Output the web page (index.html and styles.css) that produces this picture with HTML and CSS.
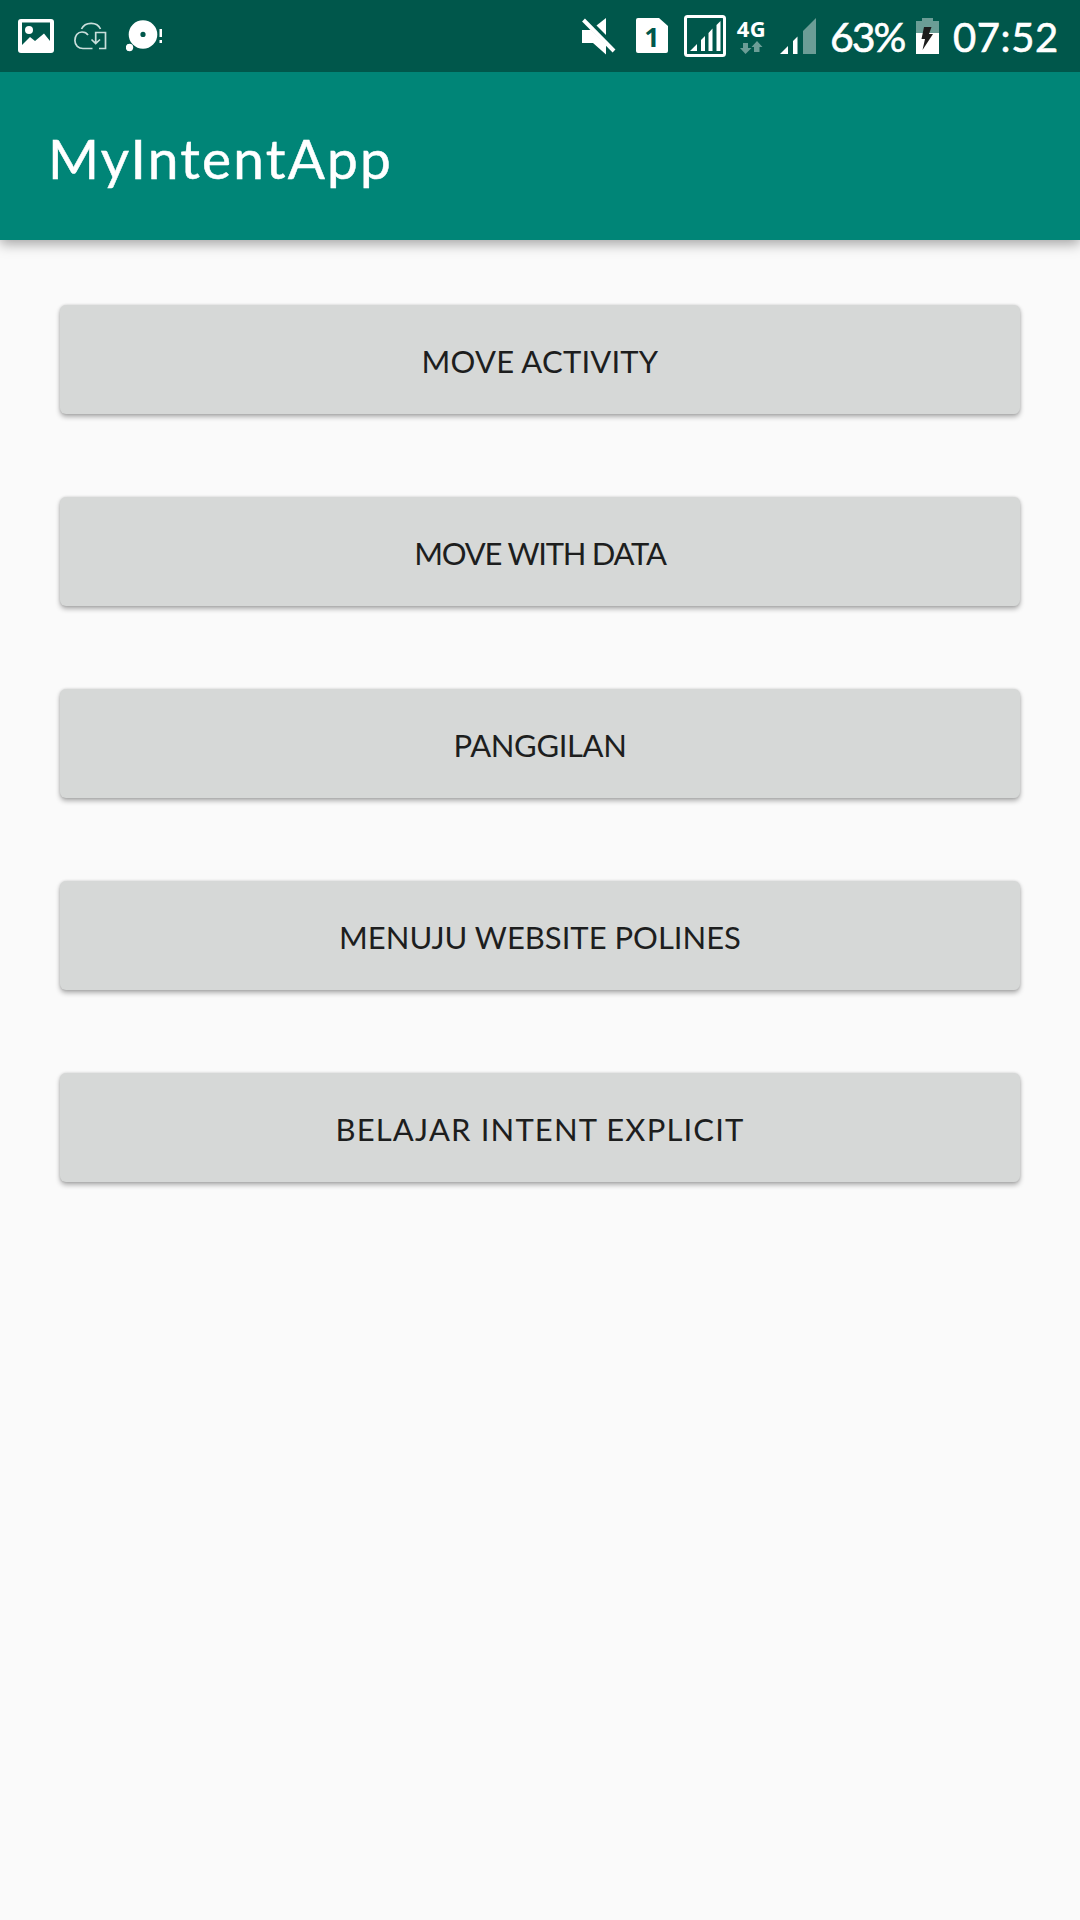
FILE: index.html
```html
<!DOCTYPE html>
<html lang="id">
<head>
<meta charset="utf-8">
<title>MyIntentApp</title>
<link rel="stylesheet" href="styles.css">
</head>
<body>
<header class="status-bar">
  <div class="status-group">
    <svg class="icon-picture" width="36" height="34" viewBox="0 0 36 34">
      <rect width="36" height="34" rx="3" fill="#fff"/>
      <path d="M4 3.500H32V22L26 14.500L17 22L12 18L4 26Z" fill="#00574b"/>
      <circle cx="11" cy="11" r="4" fill="#fff"/>
    </svg>
    <svg class="icon-cloud" width="34" height="28" viewBox="0 0 34 28" fill="none" stroke="#c9dedb" stroke-width="1.700">
      <path d="M7.500 7C11 -.2 23 -.8 26.500 7M14 13C12.500 10.500 10 10 8 10C3.500 10 .9 14 .9 18.500C.9 23.500 4.500 26.500 9 26.500H18.500M17.500 17.500L21.700 21.500L26 17.500M21.700 21V10.500H31.500V26.500H25"/>
    </svg>
    <svg class="icon-bubble" width="38" height="32" viewBox="0 0 38 32" fill="#fff">
      <path fill-rule="evenodd" d="M17 .2A14.300 14.300 0 1 1 17 28.800A14.300 14.300 0 1 1 17 .2ZM17 11.800A2.600 2.600 0 1 0 17 17A2.600 2.600 0 1 0 17 11.800Z"/>
      <circle cx="3.500" cy="27.500" r="3.700"/>
      <path d="M33.500 9H36V17H33.500ZM33.500 20H36V23H33.500Z"/>
    </svg>
  </div>
  <div class="status-group">
    <svg class="icon-mute" width="34" height="37" viewBox="0 0 34 37" fill="#fff">
      <path d="M14.500 7.500L24 0V17Z"/>
      <path d="M1.500 2L32 33" stroke="#00574b" stroke-width="7"/>
      <path d="M0 12H9L24 27V36.500L11 25H0Z"/>
      <path d="M1.500 2L32 33" stroke="#fff" stroke-width="4"/>
    </svg>
    <div class="sim-card">
      <svg width="32" height="35" viewBox="0 0 32 35">
        <path d="M2 0H23L32 8V33Q32 35 30 35H2Q0 35 0 33V2Q0 0 2 0Z" fill="#fff"/>
      </svg>
      <span class="sim-number">1</span>
    </div>
    <svg class="icon-signal-boxed" width="42" height="42" viewBox="0 0 42 42" fill="#fff">
      <rect x="1.500" y="1.500" width="39" height="39" rx="2" fill="none" stroke="#fff" stroke-width="3"/>
      <path d="M6 36L13 29V36ZM17 25L21 21V36H17ZM24.500 18L28.500 13.500V36H24.500ZM32.500 10L36.500 6V36H32.500Z"/>
    </svg>
    <div class="network">
      <span class="network-type">4G</span>
      <svg width="23" height="13" viewBox="0 0 23 13" fill="#6b9d96">
        <path d="M3 2H8V7H11.500L5.500 13L0 7H3ZM14 11V6H11.500L17 0L22.500 6H19.500V11Z"/>
      </svg>
    </div>
    <svg class="icon-signal" width="36" height="36" viewBox="0 0 36 36" fill="#fff">
      <path d="M0 36L8 28V36ZM13 23L17.500 18.500V36H13Z"/>
      <path d="M23 13L36 0V36H23Z" fill="#6b9d96"/>
    </svg>
    <span class="battery-level">63%</span>
    <svg class="icon-battery" width="23" height="36" viewBox="0 0 23 36">
      <path d="M6 0H17V3H23V15H0V3H6Z" fill="#6b9d96"/>
      <path d="M0 15H23V36H0Z" fill="#fff"/>
      <path d="M8 9H15.500L13 16H17L6.500 32L9 21H5.500Z" fill="#1c1c1c"/>
    </svg>
    <span class="clock">07:52</span>
  </div>
</header>
<div class="app-bar">
  <h1 class="app-title">MyIntentApp</h1>
</div>
<main class="actions">
  <button class="action action-move">MOVE ACTIVITY</button>
  <button class="action action-data">MOVE WITH DATA</button>
  <button class="action action-call">PANGGILAN</button>
  <button class="action action-web">MENUJU WEBSITE POLINES</button>
  <button class="action action-explicit">BELAJAR INTENT EXPLICIT</button>
</main>
</body>
</html>
```
FILE: styles.css
```css
* {
  box-sizing: border-box;
}

body {
  margin: 0;
  min-height: 1920px;
  background: #fafafa;
  font-family: Lato, "Open Sans", sans-serif;
}

svg {
  display: block;
  flex: none;
}

.status-bar {
  display: flex;
  justify-content: space-between;
  height: 72px;
  padding: 0 22px 0 18px;
  background: #00574b;
  color: #fff;
}

.status-group {
  display: flex;
  align-items: flex-start;
}

.icon-picture {
  margin-top: 19px;
}

.icon-cloud {
  margin: 22px 0 0 20px;
}

.icon-bubble {
  margin: 20px 0 0 18px;
}

.icon-mute {
  margin-top: 18px;
}

.sim-card {
  display: grid;
  width: 32px;
  margin: 18px 0 0 20px;
}

.sim-card > * {
  grid-area: 1 / 1;
}

.sim-number {
  color: #00574b;
  font: bold 27px/37px "Open Sans", sans-serif;
  text-align: center;
}

.icon-signal-boxed {
  margin: 15px 0 0 16px;
}

.network {
  display: flex;
  flex-direction: column;
  align-items: center;
  width: 29px;
  margin: 17px 0 0 11px;
}

.network-type {
  height: 24px;
  font: bold 22px/22px "Open Sans", sans-serif;
  letter-spacing: 0.6px;
}

.icon-signal {
  margin: 18px 0 0 14px;
}

.battery-level {
  width: 76px;
  margin-left: 14px;
  font-size: 41px;
  line-height: 74px;
  letter-spacing: -2px;
  white-space: nowrap;
  -webkit-text-stroke: 0.6px #fff;
}

.icon-battery {
  margin: 18px 0 0 10px;
}

.clock {
  width: 105px;
  margin-left: 14px;
  font-size: 40px;
  line-height: 74px;
  letter-spacing: 0.6px;
  white-space: nowrap;
  -webkit-text-stroke: 0.6px #fff;
}

.app-bar {
  display: flex;
  align-items: center;
  height: 168px;
  padding: 4px 48px 0;
  background: #008577;
  box-shadow: 0 4px 12px rgba(0, 0, 0, 0.35);
  clip-path: inset(0 0 -24px);
}

.app-title {
  margin: 0;
  color: #fff;
  font-size: 55px;
  font-weight: 400;
  letter-spacing: 2.2px;
  -webkit-text-stroke: 0.5px #fff;
}

.actions {
  display: flex;
  flex-direction: column;
  gap: 83px;
  padding: 65px 60px 0;
}

.action {
  height: 109px;
  padding: 3px 0 0;
  border: 0;
  border-radius: 6px;
  background: #d6d8d7;
  box-shadow: 0 3px 5px rgba(0, 0, 0, 0.3), 0 0 3px rgba(0, 0, 0, 0.15);
  color: #1d1e1e;
  font-family: inherit;
  font-size: 31px;
}

.action-move {
  letter-spacing: 0.2px;
}

.action-data {
  letter-spacing: -1.25px;
}

.action-call {
  letter-spacing: -0.35px;
}

.action-explicit {
  letter-spacing: 1.15px;
}
```
